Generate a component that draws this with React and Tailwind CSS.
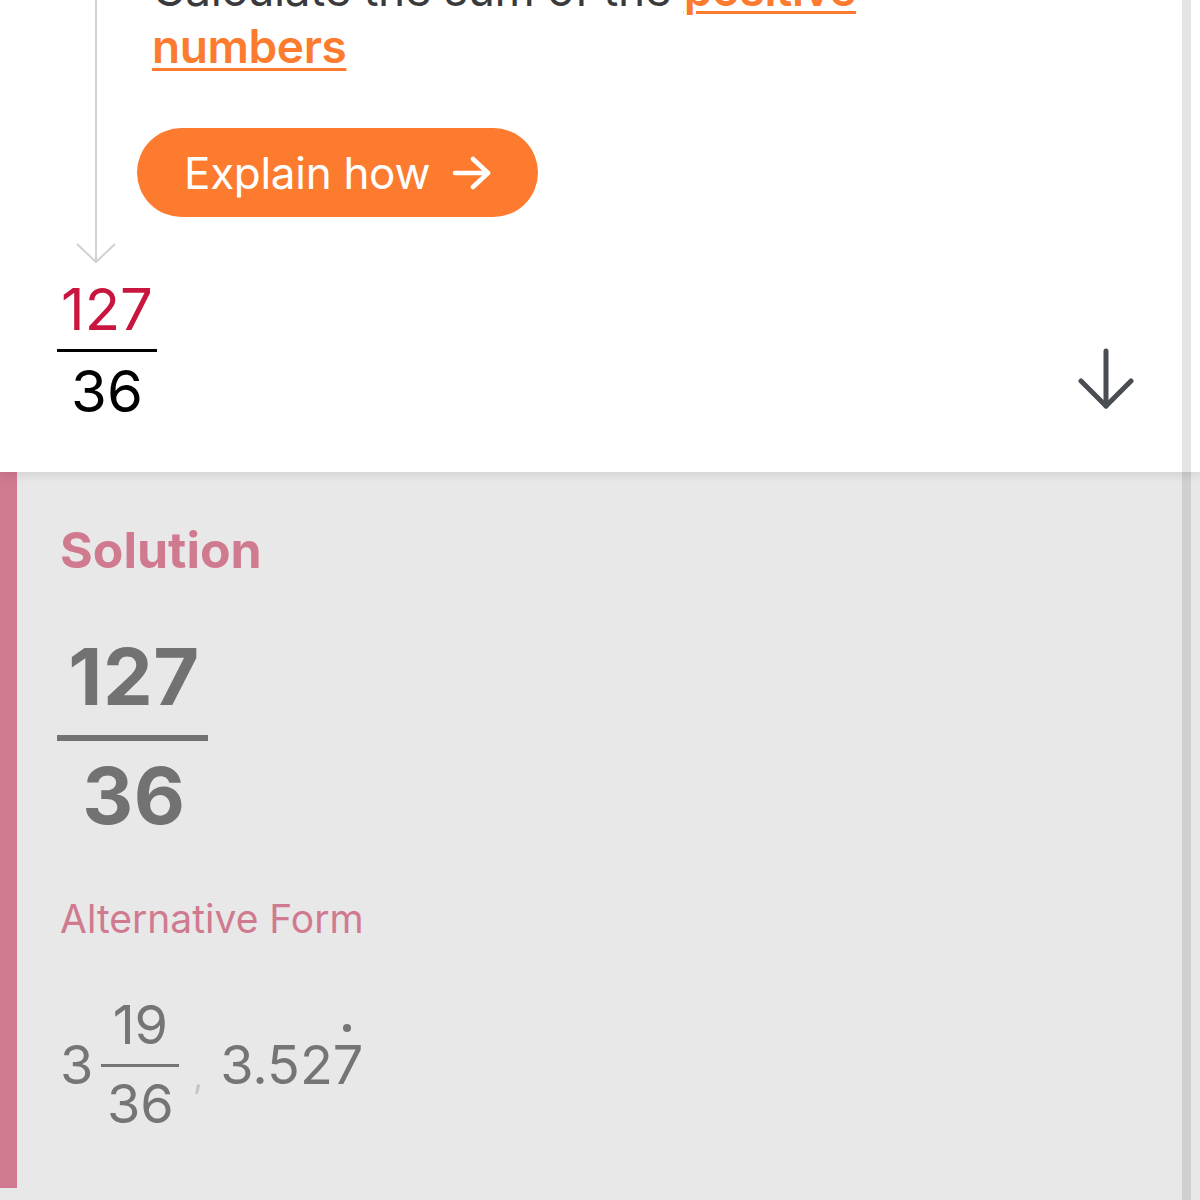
import React from "react";

function Fraction({ top, bottom, topClass, bottomClass, barClass }) {
  return (
    <div className="inline-flex flex-col items-center">
      <span className={topClass}>{top}</span>
      <span className={barClass} />
      <span className={bottomClass}>{bottom}</span>
    </div>
  );
}

function StepArrow() {
  return (
    <svg width="42" height="22" viewBox="0 0 42 22" className="-ml-[20px] block">
      <line x1="21" y1="0" x2="21" y2="20" stroke="#d2d2d2" strokeWidth="2" />
      <polyline points="2,2 21,20 40,2" fill="none" stroke="#d2d2d2" strokeWidth="2" />
    </svg>
  );
}

function ArrowRight() {
  return (
    <svg width="40" height="34" viewBox="0 0 40 34" fill="none" stroke="white" strokeWidth="4.5" strokeLinecap="round" strokeLinejoin="round">
      <path d="M3 17h33" />
      <path d="M21 3l15 14-15 14" />
    </svg>
  );
}

function ArrowDown() {
  return (
    <svg width="56" height="62" viewBox="0 0 56 62" fill="none" stroke="#4a4d52" strokeWidth="5" strokeLinecap="round" strokeLinejoin="round">
      <path d="M28 3v55" />
      <path d="M3 33l25 25 25-25" />
    </svg>
  );
}

export default function App() {
  return (
    <div className="relative w-[1200px] h-[1200px] overflow-hidden bg-[#e8e8e8] font-[Inter,sans-serif]">
      <div className="relative z-10 bg-white shadow-[0_3px_10px_rgba(0,0,0,0.10)] pb-[52px]">
        <div className="flex -mt-[39px]">
          <div className="w-[137px] pl-[95px] flex flex-col">
            <div className="w-[2px] flex-1 bg-[#d2d2d2]" />
            <StepArrow />
          </div>
          <div className="flex flex-col items-start pb-[47px]">
            <p className="pl-[15px] text-[46px] leading-[57px] tracking-[-0.4px] text-[#3a3a3c]">
              Calculate the sum of the{" "}
              <a
                href="#"
                onClick={(e) => e.preventDefault()}
                className="font-semibold text-[#fd7b2f] underline decoration-[3px] underline-offset-[5px]"
              >
                positive
                <br />
                numbers
              </a>
            </p>
            <button className="mt-[53px] h-[89px] w-[401px] rounded-full bg-[#fd7b2f] text-white text-[44px] tracking-[-0.3px] flex items-center pl-[47px] gap-[22px]">
              <span>Explain how</span>
              <ArrowRight />
            </button>
          </div>
        </div>
        <div className="flex items-end justify-between pl-[57px] pr-[66px] mt-[16px]">
          <Fraction
            top="127"
            bottom="36"
            topClass="text-[58px] leading-none text-[#c8163f]"
            barClass="block w-[100px] h-[3px] bg-black mt-[11px] mb-[10px]"
            bottomClass="text-[58px] leading-none text-black"
          />
          <div className="mb-[10px]">
            <ArrowDown />
          </div>
        </div>
      </div>

      <div className="border-l-[17px] border-[#d07a90] pl-[43px] pt-[53px] pb-[57px]">
        <h2 className="text-[50px] leading-none font-bold text-[#d07a90]">Solution</h2>
        <div className="mt-[62px]">
          <Fraction
            top="127"
            bottom="36"
            topClass="text-[79px] leading-none font-bold text-[#727272] tracking-[0.5px]"
            barClass="block w-[151px] h-[6px] bg-[#727272] -ml-[3px] mt-[19px] mb-[15px]"
            bottomClass="text-[79px] leading-none font-bold text-[#727272] tracking-[0.5px]"
          />
        </div>
        <p className="mt-[64px] text-[39px] leading-none text-[#d07a90]">Alternative Form</p>
        <div className="mt-[60px] flex items-center text-[#757575]">
          <span className="text-[54px] leading-none">3</span>
          <div className="ml-[8px]">
            <Fraction
              top="19"
              bottom="36"
              topClass="text-[54px] leading-none"
              barClass="block w-[78px] h-[3px] bg-[#757575] mt-[12px] mb-[10px]"
              bottomClass="text-[54px] leading-none"
            />
          </div>
          <span className="self-center mt-[22px] ml-[14px] text-[34px] leading-none text-[#c4c4c4]">,</span>
          <span className="relative ml-[17px] text-[54px] leading-none">
            3.527
            <span className="absolute right-[12px] -top-[14px] w-[8px] h-[8px] rounded-full bg-[#757575]" />
          </span>
        </div>
      </div>

      <div className="absolute top-0 bottom-0 left-[1182px] w-[9px] bg-black/10 z-20" />
    </div>
  );
}
